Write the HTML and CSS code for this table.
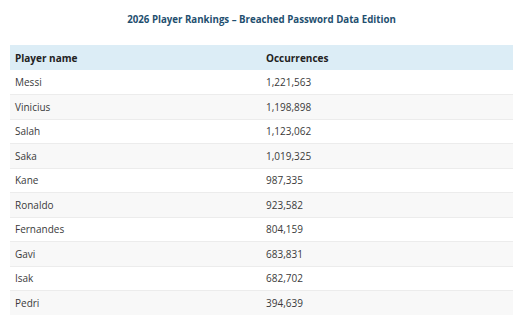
FILE: index.html
```html
<!DOCTYPE html>
<html lang="en">
<head>
<meta charset="utf-8">
<title>2026 Player Rankings</title>
<link rel="stylesheet" href="styles.css">
</head>
<body>
<div class="wrap">
  <h1 class="title">2026 Player Rankings – Breached Password Data Edition</h1>
  <table class="rank">
    <colgroup><col class="col1"><col class="col2"></colgroup>
    <thead>
      <tr><th>Player name</th><th>Occurrences</th></tr>
    </thead>
    <tbody>
      <tr><td>Messi</td><td>1,221,563</td></tr>
      <tr><td>Vinicius</td><td>1,198,898</td></tr>
      <tr><td>Salah</td><td>1,123,062</td></tr>
      <tr><td>Saka</td><td>1,019,325</td></tr>
      <tr><td>Kane</td><td>987,335</td></tr>
      <tr><td>Ronaldo</td><td>923,582</td></tr>
      <tr><td>Fernandes</td><td>804,159</td></tr>
      <tr><td>Gavi</td><td>683,831</td></tr>
      <tr><td>Isak</td><td>682,702</td></tr>
      <tr><td>Pedri</td><td>394,639</td></tr>
    </tbody>
  </table>
</div>
</body>
</html>
```
FILE: styles.css
```css
html, body {
  margin: 0;
  padding: 0;
  background: #ffffff;
}
body {
  font-family: "Open Sans", "Noto Sans", sans-serif;
  color: #333333;
}
.wrap {
  padding: 10px 11px 0 10px;
}
.title {
  margin: 0;
  height: 35px;
  line-height: 19px;
  font-size: 9.7px;
  font-weight: 700;
  color: #1f4f6f;
  text-align: center;
}
.rank {
  width: 100%;
  border-collapse: collapse;
  table-layout: fixed;
  font-size: 10px;
}
.col1 {
  width: 251px;
}
.rank th {
  background: #dcedf6;
  color: #222222;
  font-weight: 700;
  text-align: left;
  height: 25px;
  padding: 0 5px;
  box-sizing: border-box;
}
.rank td {
  height: 24.5px;
  padding: 0 5px;
  box-sizing: border-box;
  border-top: 1px solid #ececec;
  color: #3a3a3a;
}
.rank tbody tr:first-child td {
  border-top: none;
}
.rank tbody tr:nth-child(even) td {
  background: #f8f8f8;
}
```
